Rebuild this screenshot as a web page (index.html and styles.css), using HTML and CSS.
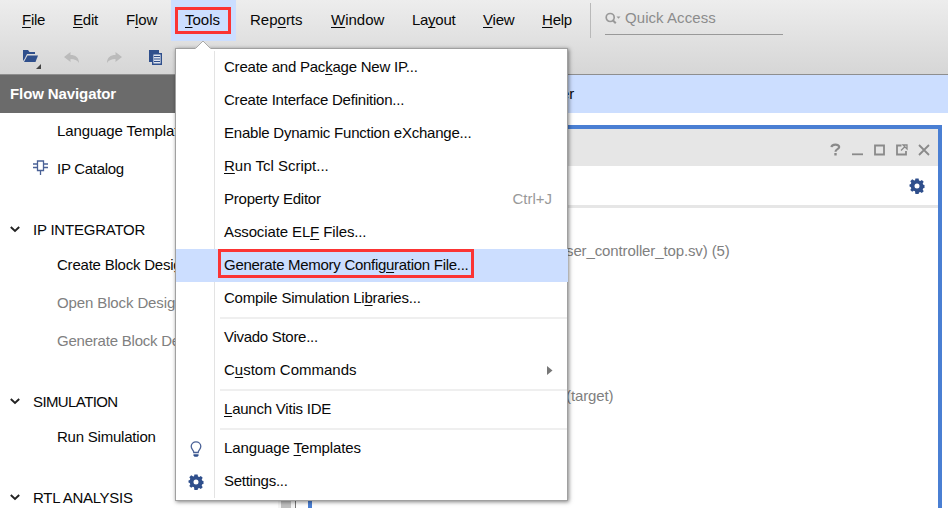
FILE: index.html
```html
<!DOCTYPE html>
<html lang="en">
<head>
<meta charset="utf-8">
<title>Vivado</title>
<link rel="stylesheet" href="styles.css">
</head>
<body>
<svg class="defs" width="0" height="0">
  <symbol id="gear" viewBox="0 0 16 16">
    <path fill-rule="evenodd" d="M6.4.6h3.2l.4 1.8 1.3.5 1.5-1 1.9 1.9-1 1.6.6 1.3 1.2.4v2.8l-1.3.4-.5 1.3 1 1.6-1.9 1.9-1.6-1-1.2.5-.4 1.3H6.4L6 13.3l-1.300-.5-1.500 1-1.900-1.900 1-1.600-.6-1.300-1.200-.4V6.500l1.300-.4.5-1.300-1-1.600 1.900-1.900 1.600 1L6 2.400zM8 5.500a2.500 2.500 0 1 0 0 5 2.500 2.500 0 0 0 0-5z"/>
  </symbol>
</svg>
<div class="app">
  <header class="top">
    <nav class="menubar">
      <span class="m file t3"><u>F</u>ile</span>
      <span class="m edit t2"><u>E</u>dit</span>
      <span class="m flow t1">F<u>l</u>ow</span>
      <span class="m tools"><span class="mark"><u>T</u>ools</span></span>
      <span class="m reports">Rep<u>o</u>rts</span>
      <span class="m window"><u>W</u>indow</span>
      <span class="m layout t3">La<u>y</u>out</span>
      <span class="m view t2"><u>V</u>iew</span>
      <span class="m help t2"><u>H</u>elp</span>
      <span class="rule"></span>
      <span class="search">
        <svg width="16" height="14" viewBox="0 0 16 14"><circle cx="5.200" cy="5.500" r="4" fill="none" stroke="#999" stroke-width="1.700"/><path d="M7.500 8l3.300 3.300" stroke="#999" stroke-width="2"/><path d="M11.500 4.500h4l-2 2.200z" fill="#999"/></svg>
        <span>Quick Access</span>
      </span>
    </nav>
    <div class="toolbar">
      <span class="tool open"><svg width="20" height="22" viewBox="0 0 20 22"><path d="M2 3h5l1.500 2H14v2H6L3.500 12 2 14z" fill="#2f4f8c"/><path d="M6.500 8.500H17L14.500 15H3z" fill="#2f4f8c"/><path d="M20 17v5h-5z" fill="#444"/></svg></span>
      <span class="tool"><svg width="16" height="12" viewBox="0 0 16 12"><path d="M0 5l6.500-5v3c5 0 8.500 2.500 8.500 8-2-3-4.500-4-8.500-4v3z" fill="#bbb"/></svg></span>
      <span class="tool"><svg width="16" height="12" viewBox="0 0 16 12"><path d="M16 5L9.500 0v3C4.500 3 1 5.500 1 11c2-3 4.500-4 8.500-4v3z" fill="#bbb"/></svg></span>
      <span class="tool"><svg width="14" height="16" viewBox="0 0 14 16"><path d="M0 0h10v3H3v9H0z" fill="#2f4f8c"/><path d="M3.700 3.700h8.600v10.600H3.700z" fill="#dfe4ee" stroke="#2f4f8c" stroke-width="1.400"/><path d="M5 6.500h6M5 9h6M5 11.500h6" stroke="#2f4f8c" stroke-width="1.200"/></svg></span>
    </div>
  </header>
  <div class="main">
    <aside class="side">
      <h2>Flow Navigator</h2>
      <div class="sidebody">
        <div class="nav">
          <div class="row t1">Language Templates</div>
          <div class="row cat t3"><svg width="16" height="16" viewBox="0 0 16 16"><path d="M4.500 1h6v9.500h-6zM0 4h4M0 7.500h4M11 4h4M11 7.500h4M7.500 11v4" fill="none" stroke="#4a6196" stroke-width="1.300"/></svg><span>IP Catalog</span></div>
          <div class="group t2"><svg width="10" height="7" viewBox="0 0 10 7"><path d="M.8 1L5 5l4.200-4" fill="none" stroke="#222" stroke-width="1.900"/></svg><span>IP INTEGRATOR</span></div>
          <div class="row t2">Create Block Design</div>
          <div class="row off t1">Open Block Design</div>
          <div class="row off t2">Generate Block Design</div>
          <div class="group t6"><svg width="10" height="7" viewBox="0 0 10 7"><path d="M.8 1L5 5l4.200-4" fill="none" stroke="#222" stroke-width="1.900"/></svg><span>SIMULATION</span></div>
          <div class="row t2">Run Simulation</div>
          <div class="group t3"><svg width="10" height="7" viewBox="0 0 10 7"><path d="M.8 1L5 5l4.200-4" fill="none" stroke="#222" stroke-width="1.900"/></svg><span>RTL ANALYSIS</span></div>
        </div>
        <div class="scroll"><div class="thumb"></div></div>
      </div>
    </aside>
    <section class="work">
      <div class="banner">er</div>
      <div class="panel">
        <div class="phead">
          <svg width="100" height="16" viewBox="0 0 100 16"><g fill="none" stroke="#8a8a8a" stroke-width="1.800"><path d="M1.500 5.200C1.800 1.800 9.200 1.800 9.200 5c0 2.200-3.700 2-3.700 4.700" stroke-width="2.200"/><path d="M5.500 11v2.500" stroke-width="2.400"/><path d="M22 12.300h11"/><path d="M45 3.500h9v9h-9z"/><path d="M71.500 3.500H67v9h9V9"/><path d="M71 8.500l4-4M73 3h4v4z" stroke-width="1.300"/><path d="M89 3l10 10M99 3L89 13"/></g></svg>
        </div>
        <div class="ptools"><svg width="16" height="16" fill="#2f4f8c"><use href="#gear"/></svg></div>
        <div class="tree">
          <div class="node t1">ser_controller_top.sv) (5)</div>
          <div class="node second t1">(target)</div>
        </div>
      </div>
    </section>
  </div>
</div>
<div class="arrow"><svg width="16" height="9" viewBox="0 0 16 9"><path d="M0 9l8-8 8 8z" fill="#fff"/><path d="M.5 8.500L8 1l7.500 7.500" fill="none" stroke="#aaa"/></svg></div>
<div class="menu">
  <div class="item t2"><i></i><span>Create and Pac<u>k</u>age New IP...</span></div>
  <div class="item t2"><i></i><span>Create Interface Definition...</span></div>
  <div class="item t2"><i></i><span>Enable Dynamic Function eXchange...</span></div>
  <div class="item"><i></i><span><u>R</u>un Tcl Script...</span></div>
  <div class="item t2"><i></i><span>Property Editor</span><span class="key">Ctrl+J</span></div>
  <div class="item t1"><i></i><span>Associate EL<u>F</u> Files...</span></div>
  <div class="item hot t3"><i></i><span class="box">Generate Memory Config<u>u</u>ration File...</span></div>
  <div class="item t2"><i></i><span>Compile Simulation Li<u>b</u>raries...</span></div>
  <div class="sep"><i></i><b></b></div>
  <div class="item t3"><i></i><span>Vivado Store...</span></div>
  <div class="item"><i></i><span>C<u>u</u>stom Commands</span><svg class="more" width="6" height="9" viewBox="0 0 6 9"><path d="M0 0l5.500 4.500L0 9z" fill="#777"/></svg></div>
  <div class="sep"><i></i><b></b></div>
  <div class="item t2"><i></i><span><u>L</u>aunch Vitis IDE</span></div>
  <div class="sep"><i></i><b></b></div>
  <div class="item t1"><i><svg width="12" height="16" viewBox="0 0 12 16"><path d="M3.800 11.500C3.800 9 1.200 8.500 1.200 5.300a4.800 4.500 0 0 1 9.600 0c0 3.200-2.600 3.700-2.600 6.200z" fill="none" stroke="#4a6196" stroke-width="1.300"/><path d="M3.500 13.200h5v1.300l-1 1.200h-3l-1-1.200z" fill="#2f4f8c"/></svg></i><span>Language <u>T</u>emplates</span></div>
  <div class="item t3"><i><svg width="16" height="16" fill="#2f4f8c"><use href="#gear"/></svg></i><span>Settings...</span></div>
</div>
</body>
</html>
```
FILE: styles.css
```css
* { box-sizing: border-box; }
body {
  margin: 0;
  width: 948px;
  height: 508px;
  overflow: hidden;
  background: #fff;
  color: #080808;
  font: 15px/17px "Liberation Sans", Arial, sans-serif;
  white-space: nowrap;
}
svg { display: block; flex: none; }
.defs { position: absolute; }
u { text-decoration-thickness: 1px; text-underline-offset: 2px; text-decoration-skip-ink: none; }

/* tracking steps for the interface labels */
.t1 { letter-spacing: -.12px; }
.t2 { letter-spacing: -.22px; }
.t3 { letter-spacing: -.29px; }
.t6 { letter-spacing: -.6px; }

.app { height: 508px; display: flex; flex-direction: column; }
.top {
  height: 75px;
  flex: none;
  background: linear-gradient(#ededed, #d6d6d6);
  border-bottom: 1px solid #8e8e8e;
}
.menubar { display: flex; height: 41px; align-items: center; padding-left: 22px; }
.m { flex: none; padding-bottom: 2px; }
.file { width: 51px; }
.edit { width: 53px; }
.flow { width: 45px; }
.tools { width: 65px; height: 41px; background: #ccdeff; padding: 7px 0 0 4px; }
.mark { display: block; width: 56px; height: 27px; border: 3px solid #fb3434; padding: 1px 0 0 7px; }
.reports { width: 95px; padding-left: 14px; }
.window { width: 81px; }
.layout { width: 71px; }
.view { width: 59px; }
.help { width: 48px; }
.rule { width: 1px; height: 35px; background: #b9b9b9; }
.search {
  width: 178px;
  height: 32px;
  margin: -3px 0 0 14px;
  border-bottom: 1px solid #999;
  display: flex;
  align-items: center;
  gap: 4px;
  color: #8c8c8c;
}
.search span { margin-bottom: 2px; letter-spacing: .06px; }
.toolbar { display: flex; height: 33px; align-items: center; padding-left: 11px; }
.tool { width: 42px; height: 33px; display: flex; align-items: center; justify-content: center; }
.open { width: 40px; }
.main { flex: 1; display: flex; min-height: 0; }
.side { width: 296px; flex: none; display: flex; flex-direction: column; border-right: 1px solid #777; }
.side h2 {
  margin: 0;
  height: 38px;
  flex: none;
  background: #6b6b6b;
  color: #fff;
  font-size: 15px;
  line-height: 38px;
  letter-spacing: -.1px;
  padding-left: 10px;
}
.sidebody { flex: 1; display: flex; min-height: 0; overflow: hidden; }
.nav { flex: 1; }
.row { height: 38px; line-height: 35px; padding-left: 57px; }
.cat { display: flex; padding-left: 33px; gap: 8px; }
.cat svg { margin-top: 9px; }
.off { color: #808080; }
.group { display: flex; align-items: center; gap: 13px; height: 33px; margin-top: 25px; padding-left: 10px; }
.group svg { margin-bottom: 3px; }
.group span { margin-bottom: 2px; }
.scroll { width: 17px; background: #f4f4f4; padding: 0 4px 0 3px; }
.thumb { height: 100%; background: #c0c0c0; }
.work { flex: 1; display: flex; flex-direction: column; }
.banner { height: 38px; flex: none; background: #ccdeff; line-height: 38px; padding-left: 265px; }
.panel {
  flex: 1;
  margin: 12px 6px 0 12px;
  border: 4px solid #4a7fd3;
  border-bottom: 0;
}
.phead { height: 37px; background: #e6e6e6; display: flex; justify-content: flex-end; padding: 13px 8px 0 0; }
.ptools {
  height: 42px;
  border-bottom: 3px solid #e6e6e6;
  display: flex;
  align-items: center;
  justify-content: flex-end;
  padding-right: 13px;
}
.tree { padding: 34px 0 0 254px; color: #808080; }
.node.second { margin-top: 128px; }
.arrow { position: absolute; left: 195px; top: 40px; z-index: 2; }
.menu {
  position: absolute;
  left: 175px;
  top: 48px;
  width: 393px;
  height: 453px;
  border: 1px solid #a0a0a0;
  background: #fff;
  padding: 2px 0;
  box-shadow: 1px 1px 4px rgba(0, 0, 0, .5);
}
.item { display: flex; align-items: center; height: 33px; }
.item > span { padding-bottom: 2px; }
.item i, .sep i {
  width: 39px;
  height: 100%;
  flex: none;
  margin-right: 9px;
  border-right: 1px solid #e3e3e3;
  display: flex;
  align-items: center;
  justify-content: center;
}
.item i svg { margin-left: 2px; }
.hot { background: #ccdeff; margin-right: -1px; }
.hot i { border-color: transparent; }
.item > .box { align-self: flex-start; width: 256px; height: 29px; margin-left: -6px; padding: 4px 3px 0; border: 3px solid #fb3434; }
.key { margin-left: auto; margin-right: 15px; color: #999; letter-spacing: 0; }
.more { margin-left: auto; margin-right: 14px; }
.sep { display: flex; height: 6px; align-items: center; }
.sep i { margin-right: 5px; }
.sep b { flex: 1; height: 2px; background: #efefef; }
```
